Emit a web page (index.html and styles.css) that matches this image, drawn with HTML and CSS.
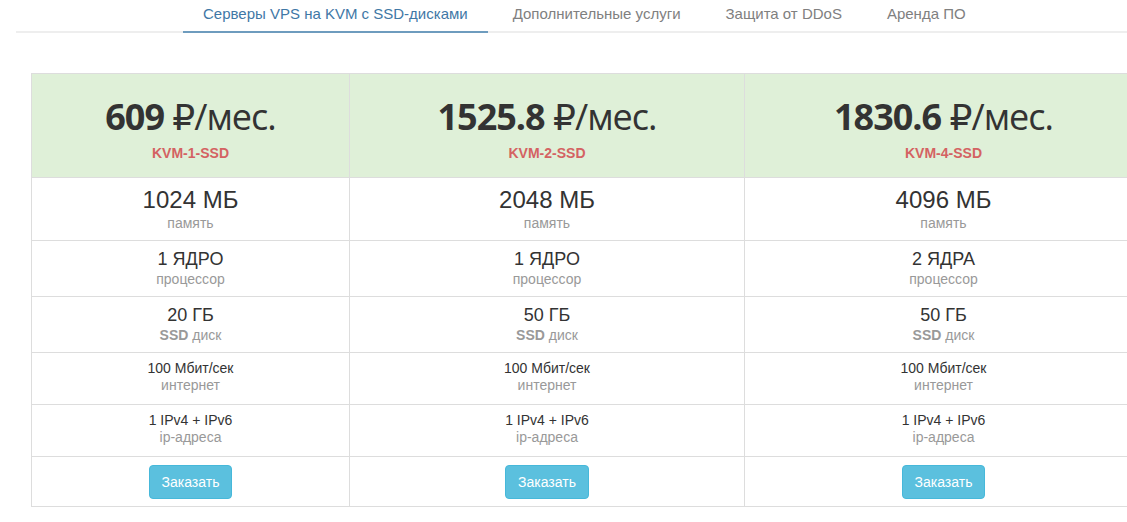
FILE: index.html
```html
<!DOCTYPE html>
<html lang="ru">
<head>
<meta charset="utf-8">
<title>VPS на KVM</title>
<link rel="stylesheet" href="styles.css">
</head>
<body>
<div class="page">
  <ul class="tabs">
    <li class="tab active"><a href="#">Серверы VPS на KVM с SSD-дисками</a></li>
    <li class="tab"><a href="#">Дополнительные услуги</a></li>
    <li class="tab"><a href="#">Защита от DDoS</a></li>
    <li class="tab"><a href="#">Аренда ПО</a></li>
  </ul>
  <div class="content">
    <table class="plans">
      <colgroup>
        <col class="c1">
        <col class="c2">
        <col class="c3">
      </colgroup>
      <thead>
        <tr>
          <th class="head">
            <div class="price"><b>609</b> ₽/мес.</div>
            <div class="name">KVM-1-SSD</div>
          </th>
          <th class="head">
            <div class="price"><b>1525.8</b> ₽/мес.</div>
            <div class="name">KVM-2-SSD</div>
          </th>
          <th class="head">
            <div class="price"><b>1830.6</b> ₽/мес.</div>
            <div class="name">KVM-4-SSD</div>
          </th>
        </tr>
      </thead>
      <tbody>
        <tr class="row-big">
          <td><div class="val">1024 МБ</div><div class="lbl">память</div></td>
          <td><div class="val">2048 МБ</div><div class="lbl">память</div></td>
          <td><div class="val">4096 МБ</div><div class="lbl">память</div></td>
        </tr>
        <tr class="row-mid">
          <td><div class="val">1 ЯДРО</div><div class="lbl">процессор</div></td>
          <td><div class="val">1 ЯДРО</div><div class="lbl">процессор</div></td>
          <td><div class="val">2 ЯДРА</div><div class="lbl">процессор</div></td>
        </tr>
        <tr class="row-mid">
          <td><div class="val">20 ГБ</div><div class="lbl"><b>SSD</b> диск</div></td>
          <td><div class="val">50 ГБ</div><div class="lbl"><b>SSD</b> диск</div></td>
          <td><div class="val">50 ГБ</div><div class="lbl"><b>SSD</b> диск</div></td>
        </tr>
        <tr class="row-sm">
          <td><div class="val">100 Мбит/сек</div><div class="lbl">интернет</div></td>
          <td><div class="val">100 Мбит/сек</div><div class="lbl">интернет</div></td>
          <td><div class="val">100 Мбит/сек</div><div class="lbl">интернет</div></td>
        </tr>
        <tr class="row-sm">
          <td><div class="val">1 IPv4 + IPv6</div><div class="lbl">ip-адреса</div></td>
          <td><div class="val">1 IPv4 + IPv6</div><div class="lbl">ip-адреса</div></td>
          <td><div class="val">1 IPv4 + IPv6</div><div class="lbl">ip-адреса</div></td>
        </tr>
        <tr class="row-btn">
          <td><a class="btn" href="#">Заказать</a></td>
          <td><a class="btn" href="#">Заказать</a></td>
          <td><a class="btn" href="#">Заказать</a></td>
        </tr>
      </tbody>
    </table>
  </div>
</div>
</body>
</html>
```
FILE: styles.css
```css
html, body {
  margin: 0;
  padding: 0;
  background: #fff;
  overflow: hidden;
}
body {
  font-family: "Liberation Sans", Arial, sans-serif;
  font-size: 14px;
  color: #333;
  width: 1127px;
  height: 522px;
}
.page {
  padding-left: 16px;
  width: 1160px;
}
.tabs {
  list-style: none;
  margin: 0;
  padding: 0 0 0 167px;
  display: flex;
  gap: 5px;
  border-bottom: 2px solid #eee;
}
.tab {
  margin-bottom: -2px;
  border-bottom: 2px solid transparent;
}
.tab a {
  display: block;
  padding: 4px 20px 7px;
  font-size: 15px;
  line-height: 20px;
  color: #808080;
  text-decoration: none;
}
.tab.active {
  border-bottom-color: #6e9cbe;
}
.tab.active a {
  color: #3f78a6;
}
.content {
  padding: 40px 0 0 15px;
}
.plans {
  border-collapse: collapse;
  table-layout: fixed;
  width: 1111px;
}
.c1 { width: 318px; }
.c2 { width: 395px; }
.c3 { width: 398px; }
.plans th, .plans td {
  border: 1px solid #ddd;
  text-align: center;
  vertical-align: top;
}
.head {
  background: #dff0d8;
  padding: 23px 8px 14px;
  font-weight: normal;
}
.price {
  font-family: "Open Sans", "DejaVu Sans", sans-serif;
  font-size: 36px;
  line-height: 40px;
  letter-spacing: -1px;
  color: #333;
  font-weight: normal;
}
.price b {
  font-weight: 700;
}
.name {
  margin-top: 6px;
  font-size: 14px;
  line-height: 20px;
  font-weight: bold;
  color: #d46262;
}
.lbl {
  color: #999;
  font-size: 14px;
  line-height: 20px;
}
.lbl b {
  font-weight: bold;
}
.row-big td {
  padding: 9px 8px 7px;
}
.row-big .val {
  font-size: 24px;
  line-height: 26px;
}
.row-mid td {
  padding: 8px 8px 7px;
}
.row-mid .val {
  font-size: 18px;
  line-height: 20px;
}
.row-sm td {
  padding: 7px 8px 10px;
}
.row-sm .val,
.row-sm .lbl {
  font-size: 14px;
  line-height: 17px;
}
.row-btn td {
  padding: 8px 8px 7px;
}
.btn {
  display: inline-block;
  padding: 6px 12px;
  font-size: 14px;
  line-height: 20px;
  color: #fff;
  background: #5bc0de;
  border: 1px solid #46b8da;
  border-radius: 4px;
  text-decoration: none;
}
```
